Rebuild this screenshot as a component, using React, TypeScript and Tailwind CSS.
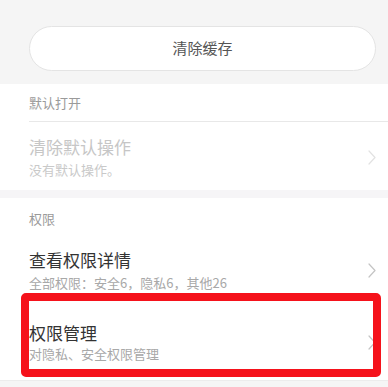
import React from "react";

/** Thin right chevron used at the end of each settings row. */
function Chevron({ color = "#c4c4c4" }: { color?: string }) {
  return (
    <svg width="8" height="15" viewBox="0 0 8 15" fill="none">
      <polyline
        points="1,1 7,7.5 1,14"
        stroke={color}
        strokeWidth="1.2"
        strokeLinecap="round"
        strokeLinejoin="round"
      />
    </svg>
  );
}

function SectionHeader({ label, h }: { label: string; h: string }) {
  return (
    <div className={`flex items-center pl-[29px] text-[13px] text-[#9a9a9a] ${h}`}>
      {label}
    </div>
  );
}

function Row({
  title,
  subtitle,
  disabled = false,
  pad,
  gap,
}: {
  title: string;
  subtitle: string;
  disabled?: boolean;
  pad: string;
  gap: string;
}) {
  return (
    <div className={`flex items-center justify-between pl-[29px] pr-[12px] ${pad}`}>
      <div className="flex flex-col">
        <span
          className={`text-[17px] leading-[22px] ${disabled ? "text-[#c6c6c6]" : "text-[#333333]"}`}
        >
          {title}
        </span>
        <span
          className={`text-[13px] leading-[18px] ${gap} ${disabled ? "text-[#c9c9c9]" : "text-[#a8a8a8]"}`}
        >
          {subtitle}
        </span>
      </div>
      <Chevron color={disabled ? "#e2e2e2" : "#c4c4c4"} />
    </div>
  );
}

export default function App() {
  return (
    <div
      className="relative h-[387px] w-[388px] overflow-hidden bg-white"
      style={{ fontFamily: '"Noto Sans CJK SC", "Noto Sans", sans-serif' }}
    >
      <div className="bg-[#f5f5f5] pb-[13px] pt-[26px]">
        <button className="ml-[29px] flex h-[45px] w-[347px] items-center justify-center rounded-full border border-[#e4e4e4] bg-white text-[15px] text-[#555555]">
          清除缓存
        </button>
      </div>

      <SectionHeader label="默认打开" h="h-[37px]" />
      <div className="ml-[29px] h-px bg-[#e8e8e8]" />
      <Row
        title="清除默认操作"
        subtitle="没有默认操作。"
        disabled
        pad="pt-[14px] pb-[11px]"
        gap="mt-[3px]"
      />

      <div className="h-[8px] bg-[#f6f5f7]" />

      <SectionHeader label="权限" h="h-[42px]" />
      <Row
        title="查看权限详情"
        subtitle="全部权限：安全6，隐私6，其他26"
        pad="pt-[9px] pb-[13px]"
        gap="mt-[3px]"
      />
      <Row
        title="权限管理"
        subtitle="对隐私、安全权限管理"
        pad="pt-[17px] pb-[17px]"
        gap="mt-[1px]"
      />
      <div className="h-[10px] border-t border-[#ececec] bg-[#f5f5f5]" />

      {/* red highlight annotation over the last row */}
      <div className="pointer-events-none absolute left-[21px] top-[293px] h-[84px] w-[360px] rounded-[5px] border-[8px] border-[#f5121b]" />
    </div>
  );
}
